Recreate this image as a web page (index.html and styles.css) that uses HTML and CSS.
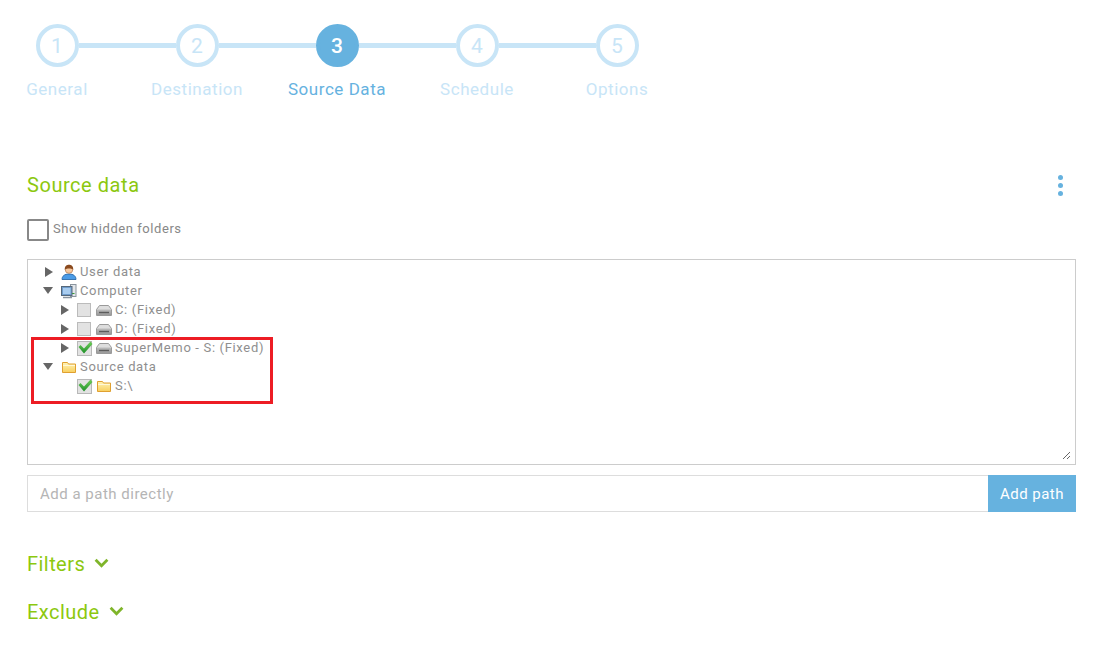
FILE: index.html
```html
<!DOCTYPE html>
<html lang="en">
<head>
    <meta charset="UTF-8">
    <title>Source Data</title>
    <link rel="stylesheet" href="styles.css">
</head>
<body>
    <svg class="icon-defs" width="0" height="0">
        <defs>
            <linearGradient id="folderFill" x1="0" y1="0" x2="0" y2="1">
                <stop offset="0" stop-color="#fff4b8"/>
                <stop offset="1" stop-color="#f8cf5e"/>
            </linearGradient>
            <linearGradient id="driveFill" x1="0" y1="0" x2="0" y2="1">
                <stop offset="0" stop-color="#bdbdbd"/>
                <stop offset="1" stop-color="#9a9a9a"/>
            </linearGradient>
            <linearGradient id="tickFill" x1="0" y1="0" x2="0" y2="1">
                <stop offset="0" stop-color="#6fcf5a"/>
                <stop offset="1" stop-color="#1f8f2a"/>
            </linearGradient>
            <symbol id="folder" viewBox="0 0 16 16">
                <path d="M1.500 13.500V3.500h5l1 1.500h7v8.500z" fill="url(#folderFill)" stroke="#e0a030"/>
                <path d="M2 6.500h12" stroke="#fff8d8"/>
            </symbol>
            <symbol id="drive" viewBox="0 0 16 16">
                <path d="M3.500 3.500h9l3 4v6H.5v-6z" fill="#dedede" stroke="#9a9a9a"/>
                <rect x="1" y="7.500" width="14" height="5.500" fill="url(#driveFill)"/>
                <path d="M3 10.500h10" stroke="#5c5c5c" stroke-width="1.400"/>
            </symbol>
            <symbol id="tick" viewBox="0 0 16 16">
                <rect x=".5" y="1.500" width="14" height="14" fill="#e2e2e2" stroke="#b8b8b8"/>
                <path d="M1.500 7l2-2 3.500 3.500L13.500 1.500l2 2.500L7 13.500z" fill="url(#tickFill)"/>
            </symbol>
        </defs>
    </svg>

    <div class="wizard">
        <ol class="stepper">
            <li class="step">
                <div class="step-head"><span class="step-line step-line-none"></span><span class="step-num">1</span><span class="step-line"></span></div>
                <div class="step-label">General</div>
            </li>
            <li class="step">
                <div class="step-head"><span class="step-line"></span><span class="step-num">2</span><span class="step-line"></span></div>
                <div class="step-label">Destination</div>
            </li>
            <li class="step active">
                <div class="step-head"><span class="step-line"></span><span class="step-num">3</span><span class="step-line"></span></div>
                <div class="step-label">Source Data</div>
            </li>
            <li class="step">
                <div class="step-head"><span class="step-line"></span><span class="step-num">4</span><span class="step-line"></span></div>
                <div class="step-label">Schedule</div>
            </li>
            <li class="step">
                <div class="step-head"><span class="step-line"></span><span class="step-num">5</span><span class="step-line step-line-none"></span></div>
                <div class="step-label">Options</div>
            </li>
        </ol>

        <div class="section-head">
            <h2 class="section-title">Source data</h2>
            <div class="more-menu"><i></i><i></i><i></i></div>
        </div>

        <label class="hidden-toggle">
            <span class="big-check"></span>
            <span class="toggle-text">Show hidden folders</span>
        </label>

        <div class="tree">
            <div class="tree-inner">
                <div class="tree-row">
                    <span class="arrow closed"></span>
                    <svg class="node-icon" viewBox="0 0 16 16">
                        <path d="M1 15.500c0-3.500 2.500-5.500 7-5.500s7 2 7 5.500z" fill="#4b9be6" stroke="#1f5f9f" stroke-width=".8"/>
                        <circle cx="8" cy="5.500" r="3.800" fill="#f6c9a0" stroke="#a8683a" stroke-width=".6"/>
                        <path d="M3.800 5.500C3.500 2 6 .8 8 .8s4.500 1.200 4.200 4.700C10 4 6 4 3.800 5.500z" fill="#8a4a1e"/>
                    </svg>
                    <span class="node-text">User data</span>
                </div>
                <div class="tree-row">
                    <span class="arrow open"></span>
                    <svg class="node-icon" viewBox="0 0 16 16">
                        <rect x="9.500" y="1.500" width="5.500" height="12" fill="#e2e6ea" stroke="#8a949e"/>
                        <path d="M11 10.500h2.500" stroke="#35a035"/>
                        <rect x=".5" y="3.500" width="10.500" height="9" fill="#6f9ccc" stroke="#56687a"/>
                        <rect x="2" y="5" width="7.500" height="6" fill="#a9cdf0"/>
                        <path d="M2 14.500h9" stroke="#8a949e" stroke-width="1.500"/>
                    </svg>
                    <span class="node-text">Computer</span>
                </div>
                <div class="tree-row depth-1">
                    <span class="arrow closed"></span>
                    <span class="tree-check"></span>
                    <svg class="drive-icon"><use href="#drive"/></svg>
                    <span class="node-text">C: (Fixed)</span>
                </div>
                <div class="tree-row depth-1">
                    <span class="arrow closed"></span>
                    <span class="tree-check"></span>
                    <svg class="drive-icon"><use href="#drive"/></svg>
                    <span class="node-text">D: (Fixed)</span>
                </div>
                <div class="tree-row depth-1">
                    <span class="arrow closed"></span>
                    <svg class="tree-tick"><use href="#tick"/></svg>
                    <svg class="drive-icon"><use href="#drive"/></svg>
                    <span class="node-text">SuperMemo - S: (Fixed)</span>
                </div>
                <div class="tree-row">
                    <span class="arrow open"></span>
                    <svg class="node-icon"><use href="#folder"/></svg>
                    <span class="node-text">Source data</span>
                </div>
                <div class="tree-row depth-1">
                    <span class="arrow none"></span>
                    <svg class="tree-tick"><use href="#tick"/></svg>
                    <svg class="drive-icon"><use href="#folder"/></svg>
                    <span class="node-text">S:\</span>
                </div>
            </div>
            <div class="highlight-box"></div>
        </div>

        <div class="path-row">
            <input class="path-input" type="text" placeholder="Add a path directly">
            <button class="path-button">Add path</button>
        </div>

        <div class="collapse-title first">Filters
            <svg class="chevron" viewBox="0 0 14 9"><path d="M1.500 1.500L7 7l5.500-5.500" fill="none" stroke="#7fb52a" stroke-width="2.600"/></svg>
        </div>
        <div class="collapse-title">Exclude
            <svg class="chevron" viewBox="0 0 14 9"><path d="M1.500 1.500L7 7l5.500-5.500" fill="none" stroke="#7fb52a" stroke-width="2.600"/></svg>
        </div>
    </div>
</body>
</html>
```

FILE: styles.css
```css
* {
    margin: 0;
    padding: 0;
    box-sizing: border-box;
}

body {
    font-family: "Roboto", "Liberation Sans", sans-serif;
    background: white;
    color: #888;
    overflow: hidden;
}

.icon-defs {
    display: block;
    height: 0;
}

.wizard {
    padding: 24px 26px 0 27px;
}

/* stepper */
.stepper {
    list-style: none;
    display: flex;
    margin-left: -40px;
}

.step {
    width: 140px;
    text-align: center;
}

.step-head {
    display: flex;
    align-items: center;
}

.step-line {
    flex: 1;
    height: 5px;
    background: #c8e5f7;
}

.step-line-none {
    background: transparent;
}

.step-num {
    width: 43px;
    height: 43px;
    border: 4px solid #c8e5f7;
    border-radius: 50%;
    display: flex;
    align-items: center;
    justify-content: center;
    font-size: 21px;
    color: #c8e5f7;
}

.step-label {
    margin-top: 12px;
    font-size: 17px;
    line-height: 20px;
    letter-spacing: 0.55px;
    color: #c8e5f7;
}

.step.active .step-num {
    background: #66b2df;
    border-color: #66b2df;
    color: white;
    font-weight: 500;
}

.step.active .step-label {
    color: #66b2df;
}

/* section */
.section-head {
    display: flex;
    justify-content: space-between;
    align-items: center;
    margin-top: 73px;
}

.section-title {
    font-size: 20px;
    line-height: 26px;
    font-weight: 400;
    letter-spacing: 0.55px;
    color: #8cc80f;
}

.more-menu {
    display: flex;
    flex-direction: column;
    gap: 3px;
    margin-right: 13px;
}

.more-menu i {
    display: block;
    width: 5px;
    height: 5px;
    border-radius: 50%;
    background: #66b2df;
}

.hidden-toggle {
    display: flex;
    align-items: center;
    gap: 4px;
    margin-top: 21px;
    font-size: 13px;
    letter-spacing: 0.56px;
    color: #888;
}

.toggle-text {
    padding-bottom: 4px;
}

.big-check {
    width: 22px;
    height: 22px;
    border: 2px solid #888;
    border-radius: 2px;
}

/* tree */
.tree {
    position: relative;
    height: 206px;
    margin-top: 18px;
    padding: 2px 4px 4px 0;
    border: 1px solid #ccc;
}

.tree-inner {
    height: 100%;
    overflow: auto;
    resize: vertical;
}

.tree-row {
    display: flex;
    align-items: center;
    height: 19px;
    padding-left: 16px;
    font-size: 13px;
    letter-spacing: 0.66px;
    color: #8f8f8f;
}

.depth-1 {
    padding-left: 32px;
}

.arrow {
    width: 8px;
    height: 10px;
    margin-right: 8px;
    flex: none;
}

.arrow.closed {
    margin-left: 1px;
    margin-right: 8px;
    border-left: 8px solid #666;
    border-top: 5px solid transparent;
    border-bottom: 5px solid transparent;
}

.arrow.open {
    width: 10px;
    height: 7px;
    margin-left: -1px;
    margin-right: 8px;
    border-top: 7px solid #666;
    border-left: 5px solid transparent;
    border-right: 5px solid transparent;
}

.arrow.none {
    margin-left: 1px;
}

.node-icon {
    width: 16px;
    height: 16px;
    flex: none;
    margin-right: 3px;
}

.tree-check {
    width: 14px;
    height: 14px;
    margin-right: 5px;
    flex: none;
    background: #e2e2e2;
    border: 1px solid #bbb;
}

.tree-tick {
    width: 16px;
    height: 16px;
    margin-right: 3px;
    flex: none;
}

.drive-icon {
    width: 16px;
    height: 16px;
    margin-right: 3px;
    flex: none;
}

.highlight-box {
    position: absolute;
    left: 3px;
    top: 77px;
    width: 242px;
    height: 67px;
    border: 3px solid #ed1c24;
}

/* path input */
.path-row {
    display: flex;
    height: 37px;
    margin-top: 10px;
}

.path-input {
    flex: 1;
    min-width: 0;
    border: 1px solid #ddd;
    border-right: none;
    padding: 0 12px;
    font-family: inherit;
    font-size: 15px;
    letter-spacing: 0.5px;
    outline: none;
}

.path-input::placeholder {
    color: #b5b5b5;
    opacity: 1;
}

.path-button {
    width: 88px;
    border: none;
    background: #66b2df;
    color: white;
    font-family: inherit;
    font-size: 15px;
    letter-spacing: 0.45px;
}

/* collapsible titles */
.collapse-title {
    display: flex;
    align-items: center;
    gap: 9px;
    height: 26px;
    margin-top: 22px;
    font-size: 20px;
    letter-spacing: 0.45px;
    color: #8cc80f;
}

.collapse-title.first {
    margin-top: 39px;
}

.chevron {
    width: 15px;
    height: 10px;
    margin-bottom: 3px;
}
```
